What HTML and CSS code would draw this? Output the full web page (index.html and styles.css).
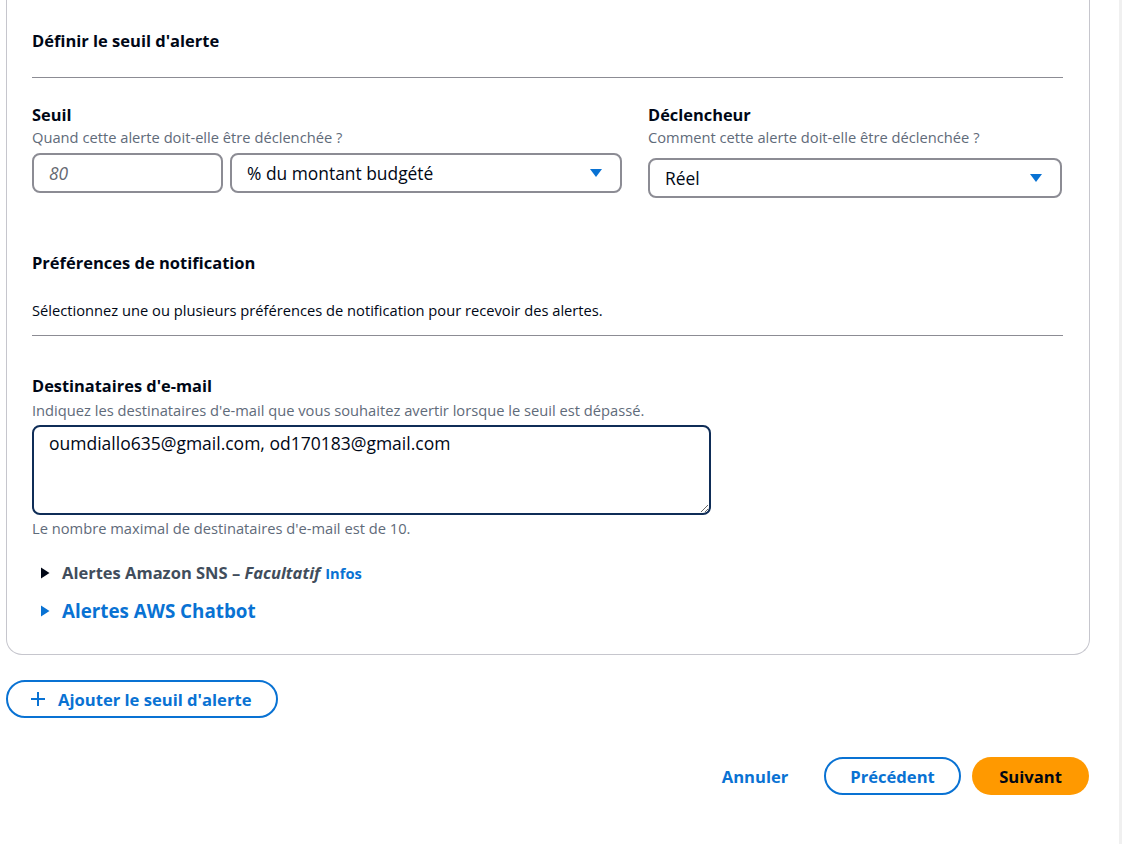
FILE: index.html
```html
<!DOCTYPE html>
<html lang="fr">
<head>
<meta charset="utf-8">
<title>Définir le seuil d'alerte</title>
<link rel="stylesheet" href="styles.css">
</head>
<body>
<div class="page">
  <section class="card">
    <h2 class="section-title">Définir le seuil d'alerte</h2>
    <hr class="divider">
    <div class="threshold-row">
      <div class="field field-seuil">
        <div class="label">Seuil</div>
        <div class="desc">Quand cette alerte doit-elle être déclenchée ?</div>
        <div class="controls">
          <input class="input input-num" type="text" placeholder="80">
          <div class="select select-unit">
            <span>% du montant budgété</span>
            <svg class="caret" width="14" height="10" viewBox="0 0 14 10"><path d="M1 1h12L7 9z" fill="#0972d3"/></svg>
          </div>
        </div>
      </div>
      <div class="field field-trigger">
        <div class="label">Déclencheur</div>
        <div class="desc">Comment cette alerte doit-elle être déclenchée ?</div>
        <div class="select select-trigger">
          <span>Réel</span>
          <svg class="caret" width="14" height="10" viewBox="0 0 14 10"><path d="M1 1h12L7 9z" fill="#0972d3"/></svg>
        </div>
      </div>
    </div>

    <h2 class="section-title notif-title">Préférences de notification</h2>
    <p class="notif-desc">Sélectionnez une ou plusieurs préférences de notification pour recevoir des alertes.</p>
    <hr class="divider divider-2">

    <div class="field field-email">
      <div class="label">Destinataires d'e-mail</div>
      <div class="desc desc-email">Indiquez les destinataires d'e-mail que vous souhaitez avertir lorsque le seuil est dépassé.</div>
      <textarea class="textarea">oumdiallo635@gmail.com, od170183@gmail.com</textarea>
      <div class="hint">Le nombre maximal de destinataires d'e-mail est de 10.</div>
    </div>

    <div class="expander expander-sns">
      <svg class="tri" width="10" height="12" viewBox="0 0 10 12"><path d="M1 0.5L9.5 6L1 11.5z" fill="#000716"/></svg>
      <span class="exp-text">Alertes Amazon SNS – <i>Facultatif</i></span>
      <a class="info-link">Infos</a>
    </div>
    <div class="expander expander-chatbot">
      <svg class="tri" width="10" height="12" viewBox="0 0 10 12"><path d="M1 0.5L9.5 6L1 11.5z" fill="#0972d3"/></svg>
      <span class="exp-text-blue">Alertes AWS Chatbot</span>
    </div>
  </section>

  <div class="add-row">
    <button class="btn btn-outline btn-add">
      <svg width="14" height="14" viewBox="0 0 14 14"><path d="M7 0v14M0 7h14" stroke="#0972d3" stroke-width="2"/></svg>
      <span>Ajouter le seuil d'alerte</span>
    </button>
  </div>

  <div class="actions">
    <button class="btn btn-link">Annuler</button>
    <button class="btn btn-outline btn-prev">Précédent</button>
    <button class="btn btn-primary">Suivant</button>
  </div>
</div>
<div class="scroll-edge"></div>
</body>
</html>
```

FILE: styles.css
```css
* { box-sizing: border-box; }
html, body { margin: 0; padding: 0; background: #ffffff; }
body {
  font-family: "Open Sans", "Noto Sans", sans-serif;
  color: #000716;
  font-size: 14.7px;
  line-height: 22px;
}
.page {
  width: 1118px;
  padding-left: 6px;
}
.card {
  width: 1084px;
  border: 1px solid #c6c6cd;
  border-top: none;
  border-radius: 0 0 16px 16px;
  padding: 30px 26px 31px 25px;
}
.section-title {
  margin: 0;
  font-size: 16.5px;
  line-height: 22px;
  font-weight: 700;
}
.divider {
  border: none;
  border-top: 1px solid #8c8c94;
  margin: 25px 0 0 0;
  height: 0;
}
.threshold-row {
  display: flex;
  gap: 26px;
  margin-top: 26px;
}
.field-seuil { width: 590px; }
.field-trigger { width: 414px; }
.label {
  font-size: 16.4px;
  line-height: 22px;
  font-weight: 700;
}
.desc {
  font-size: 14.7px;
  line-height: 22px;
  color: #5f6b7a;
}
.desc-email { margin-top: 2px; }
.controls {
  display: flex;
  gap: 7px;
  margin-top: 5px;
}
.input, .select {
  height: 40px;
  border: 2px solid #8c8c94;
  border-radius: 8px;
  font-family: inherit;
  font-size: 17.4px;
  color: #000716;
  background: #fff;
}
.input-num {
  width: 191px;
  padding: 0 15px;
  outline: none;
}
.input-num::placeholder {
  color: #656871;
  font-style: italic;
}
.select {
  display: flex;
  align-items: center;
  justify-content: space-between;
  padding: 0 17px 0 15px;
}
.select-unit { width: 392px; }
.select-trigger { width: 414px; margin-top: 10px; }
.caret { display: block; }

.notif-title { margin-top: 54px; }
.notif-desc {
  margin: 25px 0 0 0;
  font-size: 14.7px;
  line-height: 22px;
  color: #000716;
}
.divider-2 { margin-top: 14px; }

.field-email { margin-top: 39px; }
.textarea {
  display: block;
  width: 679px;
  height: 90px;
  margin-top: 4px;
  border: 2px solid #0f2d57;
  border-radius: 8px;
  padding: 4px 15px;
  font-family: inherit;
  font-size: 17.5px;
  line-height: 24px;
  color: #000716;
  outline: none;
  resize: vertical;
}
.hint {
  margin-top: 2px;
  font-size: 14.7px;
  line-height: 22px;
  color: #5f6b7a;
}

.expander {
  display: flex;
  align-items: center;
  padding-left: 8px;
}
.expander .tri { margin-right: 12px; }
.expander-sns {
  margin-top: 23px;
  height: 22px;
  font-size: 16.5px;
  font-weight: 700;
  color: #414d5c;
}
.exp-text i { font-weight: 700; }
.info-link {
  margin-left: 5px;
  font-size: 14.7px;
  font-weight: 700;
  color: #0972d3;
}
.expander-chatbot {
  margin-top: 15px;
  height: 24px;
}
.exp-text-blue {
  font-size: 18.8px;
  font-weight: 700;
  color: #0972d3;
}

.btn {
  font-family: inherit;
  font-size: 16.6px;
  font-weight: 700;
  height: 38px;
  border-radius: 20px;
  cursor: pointer;
  display: inline-flex;
  align-items: center;
  justify-content: center;
  background: #fff;
}
.btn-outline {
  border: 2px solid #0972d3;
  color: #0972d3;
}
.add-row { margin-top: 25px; }
.btn-add {
  width: 272px;
  gap: 13px;
  padding: 0 23px;
  justify-content: flex-start;
}
.actions {
  display: flex;
  justify-content: flex-end;
  align-items: center;
  width: 1083px;
  margin-top: 39px;
}
.btn-link {
  border: none;
  color: #0972d3;
  padding: 0;
  width: 66px;
  margin-right: 36px;
}
.btn-prev { width: 137px; margin-right: 11px; }
.btn-primary {
  width: 117px;
  border: none;
  background: #ff9900;
  color: #000716;
}
.scroll-edge {
  position: fixed;
  top: 0;
  right: 0;
  width: 3px;
  height: 100%;
  background: #f0f0f0;
}
```
